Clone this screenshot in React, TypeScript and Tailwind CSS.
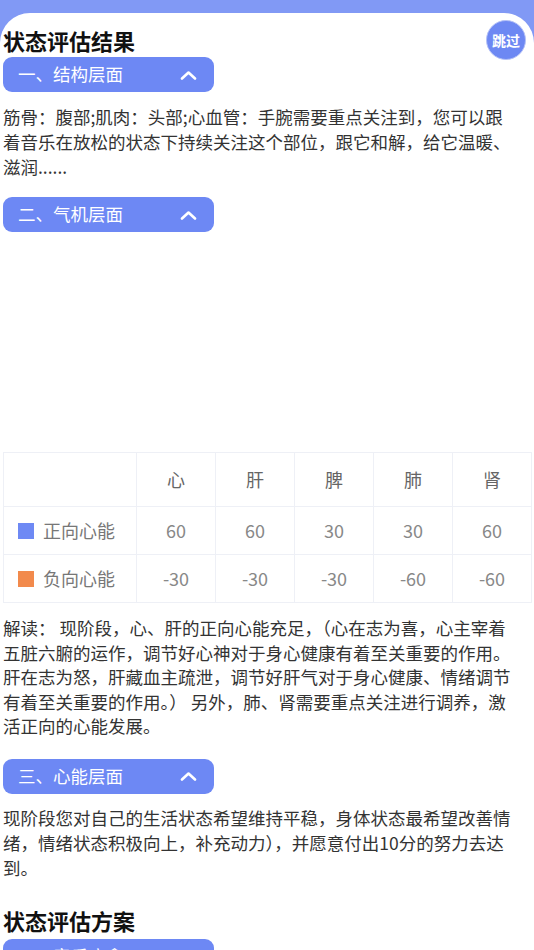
const ORGANS = ["心", "肝", "脾", "肺", "肾"];

const ROWS = [
  { label: "正向心能", color: "bg-[#6e89f4]", values: [60, 60, 30, 30, 60] },
  { label: "负向心能", color: "bg-[#f28a4c]", values: [-30, -30, -30, -60, -60] },
];

const SectionHeader = ({ title }: { title: string }) => (
  <div className="flex h-[35px] w-[211px] items-center justify-between rounded-[9px] bg-[#6d88f4] pl-[15px] pr-[16px] text-[17.5px] text-white">
    <span>{title}</span>
    <svg width="19" height="10" viewBox="0 0 19 10" fill="none">
      <path
        d="M3 8.5 L9.5 2.5 L16 8.5"
        stroke="white"
        strokeWidth="2.6"
        strokeLinecap="round"
        strokeLinejoin="round"
      />
    </svg>
  </div>
);

const App = () => {
  return (
    <div
      className="min-h-[950px] bg-[#8199f5] pt-[13px]"
      style={{ fontFamily: '"Noto Sans CJK SC", "Noto Sans", sans-serif' }}
    >
      <div className="relative min-h-[937px] rounded-t-[30px] bg-white pl-[3px] pr-[16px] pt-[15px] text-[#333]">
        {/* skip */}
        <button className="absolute right-[8px] top-[7px] flex h-[40px] w-[40px] items-center justify-center rounded-full border border-[#b4c1f7] bg-[#6d88f3] text-[14px] font-bold text-white">
          跳过
        </button>

        <h1 className="h-[24px] text-[22px] font-bold leading-[24px] text-[#111]">
          状态评估结果
        </h1>

        <div className="mt-[5px]">
          <SectionHeader title="一、结构层面" />
        </div>
        <p className="mt-[11.5px] text-[17.5px] leading-[25px]">
          筋骨：腹部;肌肉：头部;心血管：手腕需要重点关注到，您可以跟着音乐在放松的状态下持续关注这个部位，跟它和解，给它温暖、滋润......
        </p>

        <div className="mt-[18.5px]">
          <SectionHeader title="二、气机层面" />
        </div>

        {/* chart placeholder */}
        <div className="h-[220px]" />

        <table className="-mr-[13px] w-[528px] table-fixed border-collapse text-[18px]">
          <colgroup>
            <col className="w-[133px]" />
            {ORGANS.map((o) => (
              <col key={o} className="w-[79px]" />
            ))}
          </colgroup>
          <thead>
            <tr className="h-[54px]">
              <th className="border border-[#eef0f6]" />
              {ORGANS.map((o) => (
                <th key={o} className="border border-[#eef0f6] font-normal text-[#666]">
                  {o}
                </th>
              ))}
            </tr>
          </thead>
          <tbody>
            {ROWS.map((row) => (
              <tr key={row.label} className="h-[48px]">
                <td className="border border-[#eef0f6] pl-[14px] text-[#777]">
                  <div className="flex items-center gap-[9px]">
                    <span className={`h-[16px] w-[16px] ${row.color}`} />
                    <span>{row.label}</span>
                  </div>
                </td>
                {row.values.map((v, i) => (
                  <td key={i} className="border border-[#eef0f6] text-center text-[#888]">
                    {v}
                  </td>
                ))}
              </tr>
            ))}
          </tbody>
        </table>

        <p className="mt-[13px] text-[17.5px] leading-[24.5px]">
          解读： 现阶段，心、肝的正向心能充足，（心在志为喜，心主宰着五脏六腑的运作，调节好心神对于身心健康有着至关重要的作用。肝在志为怒，肝藏血主疏泄，调节好肝气对于身心健康、情绪调节有着至关重要的作用。） 另外，肺、肾需要重点关注进行调养，激活正向的心能发展。
        </p>

        <div className="mt-[20px]">
          <SectionHeader title="三、心能层面" />
        </div>
        <p className="mt-[11.5px] text-[17.5px] leading-[25px]">
          现阶段您对自己的生活状态希望维持平稳，身体状态最希望改善情绪，情绪状态积极向上，补充动力），并愿意付出10分的努力去达到。
        </p>

        <h1 className="mt-[27.5px] h-[24px] text-[22px] font-bold leading-[24px] text-[#111]">
          状态评估方案
        </h1>
        <div className="mt-[7px]">
          <SectionHeader title="一、音乐疗愈" />
        </div>
      </div>
    </div>
  );
};

export default App;
